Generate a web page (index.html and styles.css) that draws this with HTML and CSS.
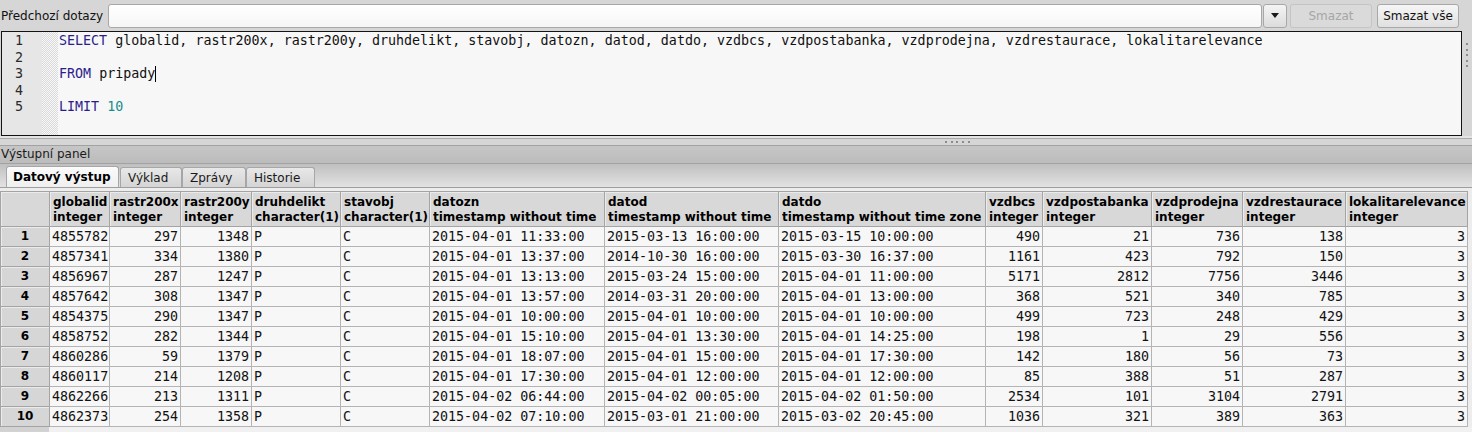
FILE: index.html
```html
<!DOCTYPE html>
<html lang="cs">
<head>
<meta charset="utf-8">
<title>Dotaz</title>
<link rel="stylesheet" href="styles.css">
</head>
<body>
<div class="toolbar">
  <span class="label">Předchozí dotazy</span>
  <div class="combo"></div>
  <div class="dropbtn"><svg width="8" height="5" viewBox="0 0 8 5"><path d="M0 0H8L4 5Z" fill="#1a1a1a"/></svg></div>
  <button class="btn disabled">Smazat</button>
  <button class="btn">Smazat vše</button>
</div>

<div class="editor-row">
  <div class="editor">
    <div class="gutter">
      <div>1</div><div>2</div><div>3</div><div>4</div><div>5</div>
    </div>
    <div class="fold"></div>
    <div class="code">
      <div class="ln"><span class="kw">SELECT</span> globalid, rastr200x, rastr200y, druhdelikt, stavobj, datozn, datod, datdo, vzdbcs, vzdpostabanka, vzdprodejna, vzdrestaurace, lokalitarelevance</div>
      <div class="ln"></div>
      <div class="ln"><span class="kw">FROM</span> pripady<span class="caret"></span></div>
      <div class="ln"></div>
      <div class="ln"><span class="kw">LIMIT</span> <span class="num">10</span></div>
    </div>
  </div>
  <div class="vgrip"><i></i><i></i><i></i><i></i><i></i></div>
</div>

<div class="hsplit"><div class="hgrip"><i></i><i></i><i></i><i></i><i></i></div></div>

<div class="titlebar">Výstupní panel</div>

<div class="tabbar">
  <div class="tab active t1">Datový výstup</div>
  <div class="tab t2">Výklad</div>
  <div class="tab t3">Zprávy</div>
  <div class="tab t4">Historie</div>
</div>

<div class="grid-area">
  <div class="grid">
    <div class="hd corner"></div>
    <div class="hd"><div class="hx">globalid<br>integer</div></div>
    <div class="hd"><div class="hx">rastr200x<br>integer</div></div>
    <div class="hd"><div class="hx">rastr200y<br>integer</div></div>
    <div class="hd"><div class="hx">druhdelikt<br>character(1)</div></div>
    <div class="hd"><div class="hx">stavobj<br>character(1)</div></div>
    <div class="hd"><div class="hx wrap">datozn<br>timestamp without time zone</div></div>
    <div class="hd"><div class="hx wrap">datod<br>timestamp without time zone</div></div>
    <div class="hd"><div class="hx">datdo<br>timestamp without time zone</div></div>
    <div class="hd"><div class="hx">vzdbcs<br>integer</div></div>
    <div class="hd"><div class="hx">vzdpostabanka<br>integer</div></div>
    <div class="hd"><div class="hx">vzdprodejna<br>integer</div></div>
    <div class="hd"><div class="hx">vzdrestaurace<br>integer</div></div>
    <div class="hd"><div class="hx">lokalitarelevance<br>integer</div></div>

    <div class="rh">1</div><div class="c r">4855782</div><div class="c r">297</div><div class="c r">1348</div><div class="c">P</div><div class="c">C</div><div class="c">2015-04-01 11:33:00</div><div class="c">2015-03-13 16:00:00</div><div class="c">2015-03-15 10:00:00</div><div class="c r">490</div><div class="c r">21</div><div class="c r">736</div><div class="c r">138</div><div class="c r">3</div>
    <div class="rh">2</div><div class="c r">4857341</div><div class="c r">334</div><div class="c r">1380</div><div class="c">P</div><div class="c">C</div><div class="c">2015-04-01 13:37:00</div><div class="c">2014-10-30 16:00:00</div><div class="c">2015-03-30 16:37:00</div><div class="c r">1161</div><div class="c r">423</div><div class="c r">792</div><div class="c r">150</div><div class="c r">3</div>
    <div class="rh">3</div><div class="c r">4856967</div><div class="c r">287</div><div class="c r">1247</div><div class="c">P</div><div class="c">C</div><div class="c">2015-04-01 13:13:00</div><div class="c">2015-03-24 15:00:00</div><div class="c">2015-04-01 11:00:00</div><div class="c r">5171</div><div class="c r">2812</div><div class="c r">7756</div><div class="c r">3446</div><div class="c r">3</div>
    <div class="rh">4</div><div class="c r">4857642</div><div class="c r">308</div><div class="c r">1347</div><div class="c">P</div><div class="c">C</div><div class="c">2015-04-01 13:57:00</div><div class="c">2014-03-31 20:00:00</div><div class="c">2015-04-01 13:00:00</div><div class="c r">368</div><div class="c r">521</div><div class="c r">340</div><div class="c r">785</div><div class="c r">3</div>
    <div class="rh">5</div><div class="c r">4854375</div><div class="c r">290</div><div class="c r">1347</div><div class="c">P</div><div class="c">C</div><div class="c">2015-04-01 10:00:00</div><div class="c">2015-04-01 10:00:00</div><div class="c">2015-04-01 10:00:00</div><div class="c r">499</div><div class="c r">723</div><div class="c r">248</div><div class="c r">429</div><div class="c r">3</div>
    <div class="rh">6</div><div class="c r">4858752</div><div class="c r">282</div><div class="c r">1344</div><div class="c">P</div><div class="c">C</div><div class="c">2015-04-01 15:10:00</div><div class="c">2015-04-01 13:30:00</div><div class="c">2015-04-01 14:25:00</div><div class="c r">198</div><div class="c r">1</div><div class="c r">29</div><div class="c r">556</div><div class="c r">3</div>
    <div class="rh">7</div><div class="c r">4860286</div><div class="c r">59</div><div class="c r">1379</div><div class="c">P</div><div class="c">C</div><div class="c">2015-04-01 18:07:00</div><div class="c">2015-04-01 15:00:00</div><div class="c">2015-04-01 17:30:00</div><div class="c r">142</div><div class="c r">180</div><div class="c r">56</div><div class="c r">73</div><div class="c r">3</div>
    <div class="rh">8</div><div class="c r">4860117</div><div class="c r">214</div><div class="c r">1208</div><div class="c">P</div><div class="c">C</div><div class="c">2015-04-01 17:30:00</div><div class="c">2015-04-01 12:00:00</div><div class="c">2015-04-01 12:00:00</div><div class="c r">85</div><div class="c r">388</div><div class="c r">51</div><div class="c r">287</div><div class="c r">3</div>
    <div class="rh">9</div><div class="c r">4862266</div><div class="c r">213</div><div class="c r">1311</div><div class="c">P</div><div class="c">C</div><div class="c">2015-04-02 06:44:00</div><div class="c">2015-04-02 00:05:00</div><div class="c">2015-04-02 01:50:00</div><div class="c r">2534</div><div class="c r">101</div><div class="c r">3104</div><div class="c r">2791</div><div class="c r">3</div>
    <div class="rh">10</div><div class="c r">4862373</div><div class="c r">254</div><div class="c r">1358</div><div class="c">P</div><div class="c">C</div><div class="c">2015-04-02 07:10:00</div><div class="c">2015-03-01 21:00:00</div><div class="c">2015-03-02 20:45:00</div><div class="c r">1036</div><div class="c r">321</div><div class="c r">389</div><div class="c r">363</div><div class="c r">3</div>
  </div>
  <div class="filler"><div class="filler-rh"></div></div>
</div>
</body>
</html>
```

FILE: styles.css
```css
* { box-sizing: border-box; }
html, body { margin: 0; padding: 0; }
body {
  width: 1472px;
  height: 432px;
  overflow: hidden;
  background: #d6d6d6;
  font-family: "DejaVu Sans", "Noto Sans", sans-serif;
  font-size: 12px;
  color: #111;
  display: flex;
  flex-direction: column;
}

/* toolbar */
.toolbar {
  height: 31px;
  flex: none;
  display: flex;
  align-items: center;
  padding: 0 13px 0 1px;
}
.label { white-space: nowrap; margin-right: 5px; }
.combo {
  flex: 1;
  height: 24px;
  border: 1px solid #a8a8a8;
  border-radius: 3px;
  background: linear-gradient(#ffffff, #f6f6f6);
  margin-right: 1px;
}
.dropbtn {
  width: 24px;
  height: 24px;
  border: 1px solid #a8a8a8;
  border-radius: 3px;
  background: linear-gradient(#f4f4f4, #dcdcdc);
  display: flex;
  align-items: center;
  justify-content: center;
}
.btn {
  width: 82px;
  height: 24px;
  margin-left: 4px;
  border: 1px solid #a8a8a8;
  border-radius: 3px;
  background: linear-gradient(#f6f6f6, #e0e0e0);
  font-family: "DejaVu Sans", sans-serif;
  font-size: 12px;
  color: #111;
  padding: 0;
}
.btn.disabled {
  margin-left: 3px;
  color: #a6a6a6;
  border-color: #c4c4c4;
  background: #dadada;
}
.btn + .btn { margin-left: 5px; }

/* editor */
.editor-row {
  height: 105px;
  flex: none;
  display: flex;
  padding-left: 1px;
}
.editor {
  flex: 1;
  display: flex;
  border: 1px solid #141414;
  background: #f7f7f7;
}
.gutter {
  width: 40px;
  background: #e6e6e6;
  font-family: "DejaVu Sans Mono", monospace;
  font-size: 13.33px;
  line-height: 16.5px;
  text-align: right;
  padding: 1px 19px 0 0;
  color: #2a2a2a;
}
.fold {
  width: 16px;
  background: repeating-conic-gradient(#d9d9d9 0 25%, #f8f8f8 0 50%) 0 0 / 2px 2px;
}
.code {
  flex: 1;
  font-family: "DejaVu Sans Mono", monospace;
  font-size: 13.33px;
  line-height: 16.5px;
  padding: 1px 0 0 1px;
  color: #111;
}
.ln { height: 16.5px; white-space: pre; }
.kw { color: #2b1d8c; }
.num { color: #14908c; }
.caret {
  display: inline-block;
  width: 1px;
  height: 16px;
  background: #000;
  vertical-align: -4px;
}
.vgrip {
  width: 10px;
  padding: 12px 0 0 4px;
  display: flex;
  flex-direction: column;
  gap: 3.5px;
}
.vgrip i, .hgrip i {
  display: block;
  width: 2px;
  height: 2px;
  background: #8c8c8c;
}

/* horizontal splitter */
.hsplit {
  height: 9px;
  flex: none;
  background: linear-gradient(#e4e4e4 0 2px, #ababab 2px 3px, #d6d6d6 3px);
  padding: 5px 0 0 945px;
}
.hgrip { display: flex; gap: 3.67px; }

/* output panel title */
.titlebar {
  height: 19px;
  flex: none;
  border-top: 1px solid #a2a2a2;
  border-bottom: 1px solid #a2a2a2;
  background: linear-gradient(#c6c6c6, #bcbcbc);
  padding-left: 1px;
  line-height: 17px;
  color: #1a1a1a;
}

/* tabs */
.tabbar {
  height: 24px;
  flex: none;
  display: flex;
  align-items: flex-end;
  border-bottom: 1px solid #9e9e9e;
  background: linear-gradient(#c0c0c0, #e2e2e2);
  padding-left: 6px;
}
.tab {
  height: 20px;
  border: 1px solid #a6a6a6;
  border-bottom: none;
  border-radius: 3px 3px 0 0;
  background: linear-gradient(#e8e8e8, #d4d4d4);
  padding: 1px 0 0 7px;
  line-height: 19px;
  white-space: nowrap;
  overflow: hidden;
  color: #1a1a1a;
}
.tab.active {
  background: linear-gradient(#fbfbfb, #efefef);
  font-weight: bold;
  color: #000;
  height: 21px;
  padding-left: 6px;
}
.t1 { width: 113px; }
.t2 { width: 62px; margin-left: 1px; }
.t3 { width: 64px; }
.t4 { width: 69px; }

/* data grid */
.grid-area {
  flex: 1;
  background: #ededed;
  padding-top: 3px;
  display: flex;
  flex-direction: column;
}
.grid {
  display: grid;
  grid-template-columns: 50px 60px 71px 71px 89px 89px 175px 174px 207px 57px 109px 91px 103px 122px;
  grid-template-rows: 36px repeat(10, 20px);
  width: 1468px;
}
.hd {
  border-top: 1px solid #a4a4a4;
  border-right: 1px solid #a4a4a4;
  border-bottom: 1px solid #a4a4a4;
  background: #d8d8d8;
  box-shadow: inset 1px 1px 0 #ebebeb;
  font-weight: bold;
  font-size: 12px;
  line-height: 15px;
  padding: 3px 0 0 3px;
  overflow: hidden;
  color: #000;
}
.hx {
  height: 30px;
  overflow: hidden;
  white-space: nowrap;
}
.hx.wrap { white-space: normal; }
.hd.corner { border-left: 1px solid #a4a4a4; }
.rh {
  border-right: 1px solid #a4a4a4;
  border-bottom: 1px solid #a4a4a4;
  border-left: 1px solid #a4a4a4;
  background: #d6d6d6;
  box-shadow: inset 1px 1px 0 #ebebeb;
  font-weight: bold;
  text-align: center;
  line-height: 19px;
  color: #000;
}
.c {
  border-right: 1px solid #b4b4b4;
  border-bottom: 1px solid #b4b4b4;
  background: #f7f7f7;
  font-family: "DejaVu Sans Mono", monospace;
  font-size: 13.33px;
  line-height: 19px;
  padding: 0 2px;
  white-space: nowrap;
  overflow: hidden;
  color: #111;
}
.c.r { text-align: right; }
.filler { flex: 1; background: #f1f1f1; display: flex; }
.filler-rh { width: 49px; background: #d2d2d2; }
```
